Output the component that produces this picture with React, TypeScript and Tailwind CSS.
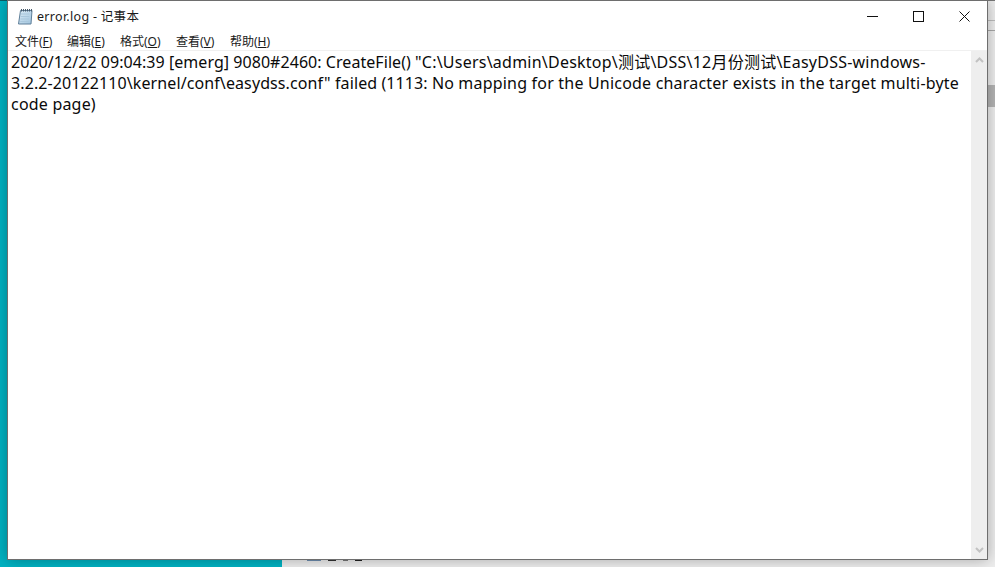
const NotepadIcon = () => (
  <svg width="16" height="17" viewBox="0 0 16 17">
    <defs>
      <linearGradient id="page" x1="0" y1="0" x2="1" y2="1">
        <stop offset="0" stopColor="#dcecf7" />
        <stop offset="1" stopColor="#9fc3dd" />
      </linearGradient>
    </defs>
    <path d="M3.500 2.500h11.500l-1 13.500H1.500z" fill="url(#page)" stroke="#5f7f99" />
    <path d="M4 6h8.500M3.800 8.500h8.500M3.500 11h8.500M3.300 13.500h8.500" stroke="#a9c7dc" />
    <path d="M4.500 1v2.500M6.500 1v2.500M8.500 1v2.500M10.500 1v2.500M12.500 1v2.500M14.500 1v2.500" stroke="#46596a" />
  </svg>
);

const WindowFrame = () => (
  <div className="flex h-[560px] w-[981px] flex-col border border-[#6e6e6e] bg-white shadow-[0_0_14px_rgba(0,0,0,0.3)]">
    <div className="flex h-[31px] shrink-0 items-center justify-between">
      <div className="flex items-center pl-[9px]">
        <NotepadIcon />
        <span className="ml-[4px] pt-[1px] text-[12.5px] tracking-[0.3px] text-[#1a1a1a]">error.log - 记事本</span>
      </div>
      <div className="flex h-full items-center">
        <div className="flex w-[46px] justify-center">
          <svg width="11" height="11" viewBox="0 0 11 11"><path d="M0 5.500h11" stroke="#111" strokeWidth="1" /></svg>
        </div>
        <div className="flex w-[46px] justify-center">
          <svg width="11" height="11" viewBox="0 0 11 11"><rect x="0.500" y="0.500" width="10" height="10" fill="none" stroke="#111" /></svg>
        </div>
        <div className="flex w-[46px] justify-center">
          <svg width="11" height="11" viewBox="0 0 11 11"><path d="M0.500 0.500l10 10M10.500 0.500l-10 10" stroke="#111" /></svg>
        </div>
      </div>
    </div>
    <div className="flex h-[18px] shrink-0 items-center pl-[7px] pt-[1px] text-[12px] text-[#1a1a1a]">
      <span className="w-[52px]">文件(<u>F</u>)</span>
      <span className="w-[53px]">编辑(<u>E</u>)</span>
      <span className="w-[56px]">格式(<u>O</u>)</span>
      <span className="w-[54px]">查看(<u>V</u>)</span>
      <span>帮助(<u>H</u>)</span>
    </div>
    <div className="flex min-h-0 flex-1 border-t border-[#f0f0f0]">
      {/* tracking differs per run because Noto's widths drift from the original font */}
      <div className="min-w-0 flex-1 whitespace-pre pl-[3px] pt-[1px] text-[16px] leading-[21px] text-[#0a0a0a]">
        <span className="tracking-[0.05px]">2020/12/22 09:04:39 [emerg] 9080#2460: CreateFile() </span>
        <span className="tracking-[0.23px]">"C:\Users\admin\Desktop\测试\DSS\12月份测试\EasyDSS-windows-</span>
        <br />
        <span className="tracking-[0.1px]">3.2.2-20122110\kernel/conf\easydss.conf" failed (1113: No </span>
        <span className="tracking-[0.2px]">mapping for the Unicode character exists in the target multi-byte</span>
        <br />
        <span className="tracking-[0.2px]">code page)</span>
      </div>
      <div className="flex w-[16px] shrink-0 flex-col items-center justify-between bg-[#eeeeee] py-[6px]">
        <svg width="9" height="6" viewBox="0 0 9 6"><path d="M1 5l3.500-3.500L8 5" fill="none" stroke="#c2c2c2" strokeWidth="2" /></svg>
        <svg width="9" height="6" viewBox="0 0 9 6"><path d="M1 1l3.500 3.500L8 1" fill="none" stroke="#c2c2c2" strokeWidth="2" /></svg>
      </div>
    </div>
  </div>
);

export default function App() {
  return (
    <div
      className="relative flex h-[567px] w-[995px] overflow-hidden"
      style={{ fontFamily: '"Noto Sans", "Noto Sans CJK SC", sans-serif' }}
    >
      {/* desktop wallpaper */}
      <div className="h-full w-[282px] shrink-0 border-t border-[#0a5f68] bg-[#00b2c2]" />

      {/* window behind the notepad, mostly hidden */}
      <div className="relative h-full flex-1 border-t border-[#777777] bg-[#eeeeee]">
        <div className="absolute right-0 top-[19px] h-px w-[8px] bg-[#bdbdbd]" />
        <div className="absolute right-0 top-[29px] h-px w-[8px] bg-[#a8a8a8]" />
        <div className="absolute right-0 top-[84px] h-[22px] w-[8px] bg-[#b4b4b4]" />
        {/* top edge of a file icon and its label, only a sliver shows under the notepad */}
        <div className="absolute left-[25px] top-[558px] flex h-[2px] gap-[7px]">
          <div className="w-[14px] bg-[#6f8fb0]" />
          <div className="w-[8px] bg-[#333333]" />
          <div className="w-[5px] bg-[#777777]" />
          <div className="w-[7px] bg-[#222222]" />
        </div>
      </div>

      <div className="absolute left-[7px] top-0">
        <WindowFrame />
      </div>
    </div>
  );
}
